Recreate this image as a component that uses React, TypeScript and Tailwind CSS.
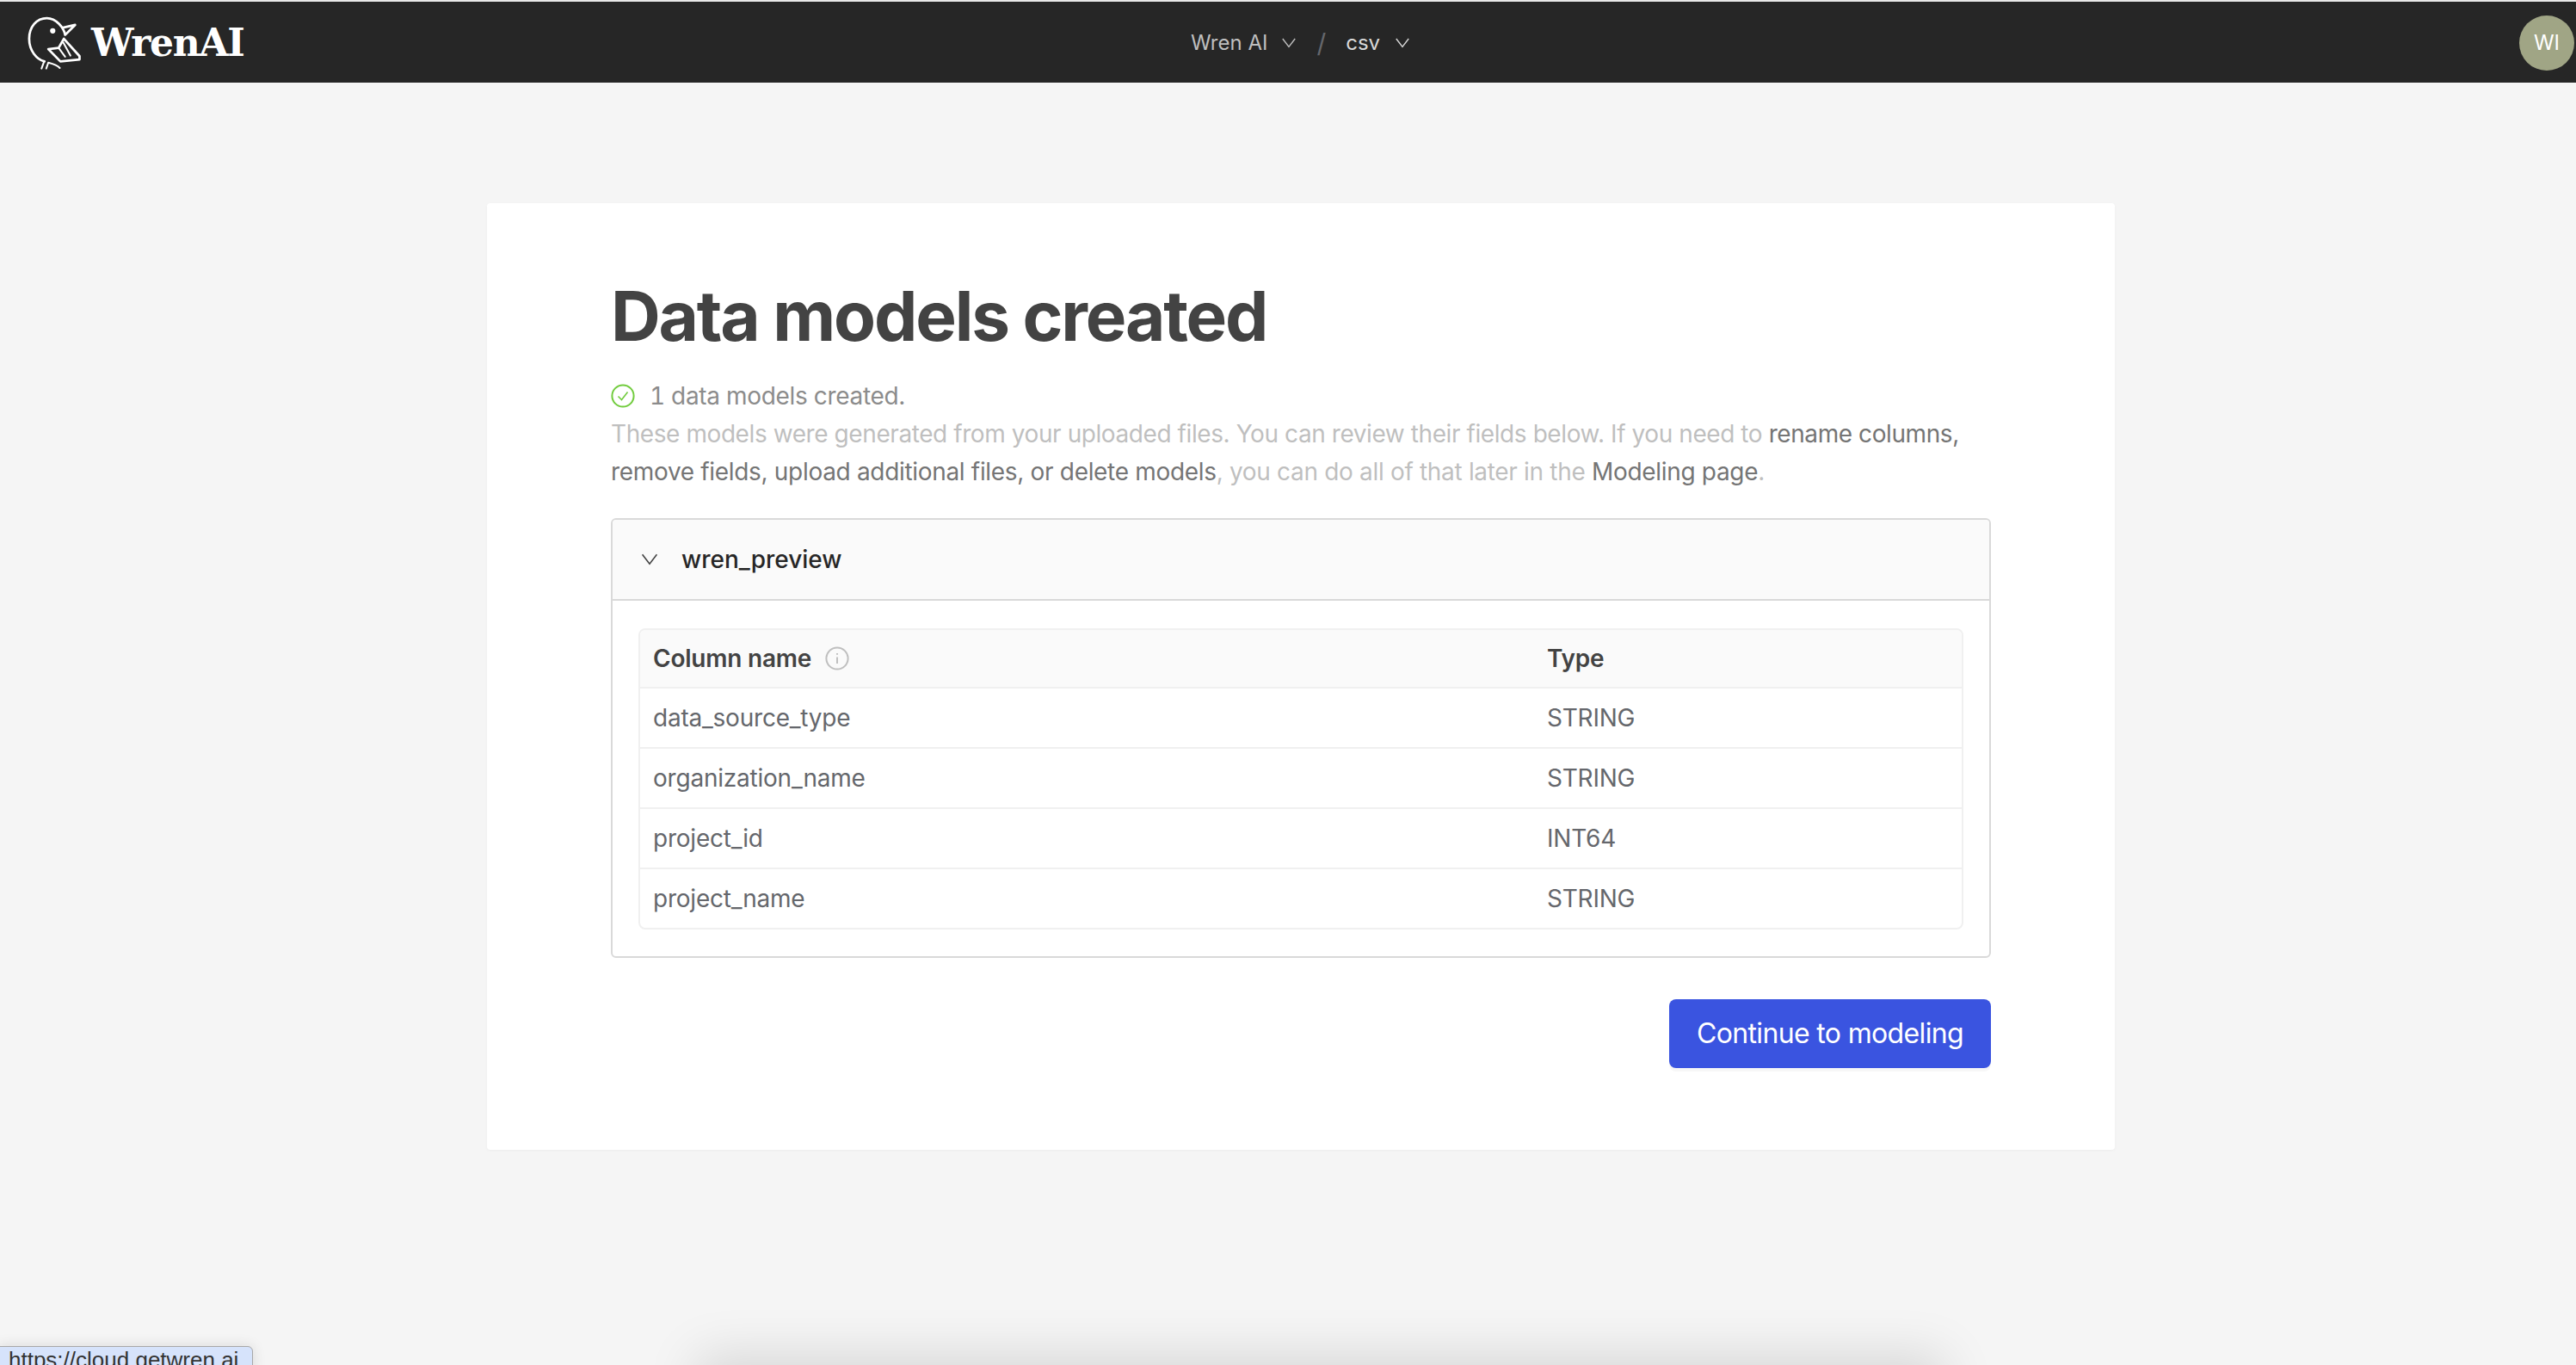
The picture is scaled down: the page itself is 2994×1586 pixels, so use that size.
import React from "react";

const rows = [
  ["data_source_type", "STRING"],
  ["organization_name", "STRING"],
  ["project_id", "INT64"],
  ["project_name", "STRING"],
];

function Chevron({ className }: { className: string }) {
  return (
    <svg viewBox="0 0 16 12" className={className} fill="none" stroke="currentColor" strokeWidth="1.4">
      <path d="M0.8 1 L8 10.4 L15.2 1" />
    </svg>
  );
}

function Logo() {
  return (
    <svg viewBox="92 56 186 184" className="h-[63px] w-[64px] shrink-0" fill="none" stroke="#fff" strokeWidth="8" strokeLinejoin="round" strokeLinecap="round">
      <path d="M215 97 L256 88 L222 122 C218 98 192 65 160 65 C125 65 100 95 100 135 C100 175 125 205 152 212" />
      <circle cx="180" cy="108" r="9" fill="#fff" stroke="none" />
      <path d="M218 135 L271 194 L271 205 L206 212 L165 170 L200 166 Z" />
      <path d="M200 166 L222 196 M216 148 L240 192" strokeWidth="6" />
      <path d="M150 214 L142 236 M165 216 L158 236 M165 216 C180 220 195 224 204 234" strokeWidth="6" />
    </svg>
  );
}

export default function App() {
  return (
    <div className="relative h-[1586px] w-[2994px] overflow-hidden bg-[#f5f5f5] font-['Inter',sans-serif]">
      <header className="flex h-[96px] items-center border-t-2 border-[#e8e8e8] bg-[#262626]">
        <div className="flex w-[1384px] items-center gap-[11px] pl-[31px]">
          <Logo />
          <span className="pt-[2px] font-['DejaVu_Serif',serif] text-[44px] font-bold leading-none tracking-[-1.3px] text-white">WrenAI</span>
        </div>
        <nav className="flex items-center pt-[2px] text-[24px] leading-none">
          <span className="text-[#bfbfbf]">Wren AI</span>
          <Chevron className="ml-[17px] h-[12px] w-[16px] text-[#bfbfbf]" />
          <span className="ml-[24px] text-[30px] leading-none text-[#65676c]">/</span>
          <span className="ml-[23px] text-[#d9d9d9]">csv</span>
          <Chevron className="ml-[18px] h-[12px] w-[16px] text-[#d9d9d9]" />
        </nav>
        <div className="ml-auto mr-[2px] mt-[2px] flex h-[64px] w-[64px] items-center justify-center rounded-full bg-[#a0a585] text-[24px] text-white">
          WI
        </div>
      </header>

      <main className="ml-[566px] mt-[140px] h-[1100px] w-[1892px] rounded-[4px] bg-white px-[144px] pt-[85px] shadow-[0_1px_3px_rgba(0,0,0,0.04)]">
        <h1 className="text-[80px] font-bold leading-[92px] tracking-[-2.2px] text-[#434343]">Data models created</h1>
        <div className="mt-[25px] flex h-[44px] items-center text-[28px] tracking-[-0.3px] text-[#8c8c8c] tabular-nums">
          <svg viewBox="0 0 28 28" className="h-[28px] w-[28px]" fill="none" stroke="#72cc3e" strokeWidth="2">
            <circle cx="14" cy="14" r="12.6" />
            <path d="M8.5 14.5 L12.5 18.5 L19.5 9.5" strokeWidth="1.6" />
          </svg>
          <span className="ml-[17px]">1 data models created.</span>
        </div>
        <p className="text-[28px] leading-[44px] tracking-[-0.42px] text-[#bfbfbf]">
          These models were generated from your uploaded files. You can review their fields below. If you need to{" "}
          <span className="text-[#757575]">rename columns, </span>
          <span className="tracking-[-0.32px]">
            <span className="text-[#757575]">remove fields, upload additional files, or delete models</span>
            , you can do all of that later in the <span className="text-[#757575]">Modeling page</span>.
          </span>
        </p>

        <section className="mt-[32px] h-[511px] rounded-[6px] border-2 border-[#d9d9d9]">
          <div className="flex h-[94px] items-center rounded-t-[4px] border-b-2 border-[#d9d9d9] bg-[#fafafa] pl-[32px]">
            <Chevron className="h-[14px] w-[22px] text-[#434343]" />
            <span className="ml-[26px] text-[28px] font-medium text-[#262626]">wren_preview</span>
          </div>
          <div className="px-[30px] pt-[32px]">
            <table className="w-full border-separate border-spacing-0 rounded-[8px] border-2 border-[#f0f0f0] text-[28px] tracking-[-0.22px]">
              <thead>
                <tr className="h-[68px] bg-[#fafafa] text-left text-[#434343]">
                  <th className="w-[1039px] rounded-tl-[6px] border-b-2 border-[#f0f0f0] pl-[15px] font-semibold">
                    <span className="flex items-center gap-[16px]">
                      Column name
                      <svg viewBox="0 0 28 28" className="h-[28px] w-[28px]" fill="none" stroke="#bfbfbf" strokeWidth="2">
                        <circle cx="14" cy="14" r="12.6" />
                        <path d="M14 12.5 V20 M14 8 V9.8" />
                      </svg>
                    </span>
                  </th>
                  <th className="rounded-tr-[6px] border-b-2 border-[#f0f0f0] pl-[15px] font-semibold">Type</th>
                </tr>
              </thead>
              <tbody>
                {rows.map(([name, type], i) => (
                  <tr key={name} className={i < 3 ? "h-[70px] text-[#65676c]" : "h-[68px] text-[#65676c]"}>
                    <td className={i < 3 ? "border-b-2 border-[#f0f0f0] pl-[15px]" : "pl-[15px]"}>{name}</td>
                    <td className={i < 3 ? "border-b-2 border-[#f0f0f0] pl-[15px]" : "pl-[15px]"}>{type}</td>
                  </tr>
                ))}
              </tbody>
            </table>
          </div>
        </section>

        <div className="mt-[48px] flex justify-end">
          <button className="h-[80px] w-[374px] rounded-[8px] bg-[#3a54e0] text-[32px] tracking-[-0.65px] text-white shadow-[0_4px_0_rgba(0,0,0,0.03)]">
            Continue to modeling
          </button>
        </div>
      </main>

      <div className="absolute bottom-[-50px] left-[820px] h-[50px] w-[1430px] shadow-[0_0_60px_10px_rgba(0,0,0,0.13)]" />
      <div className="absolute bottom-[-10px] left-[-2px] h-[32px] w-[296px] rounded-tr-[6px] border border-[#a8a8a8] bg-[#d6e3fb] pl-[11px] font-['Liberation_Sans',sans-serif] text-[26px] leading-[30px] text-[#333] shadow-[0_0_16px_rgba(0,0,0,0.12)]">
        https://cloud.getwren.ai
      </div>
    </div>
  );
}
